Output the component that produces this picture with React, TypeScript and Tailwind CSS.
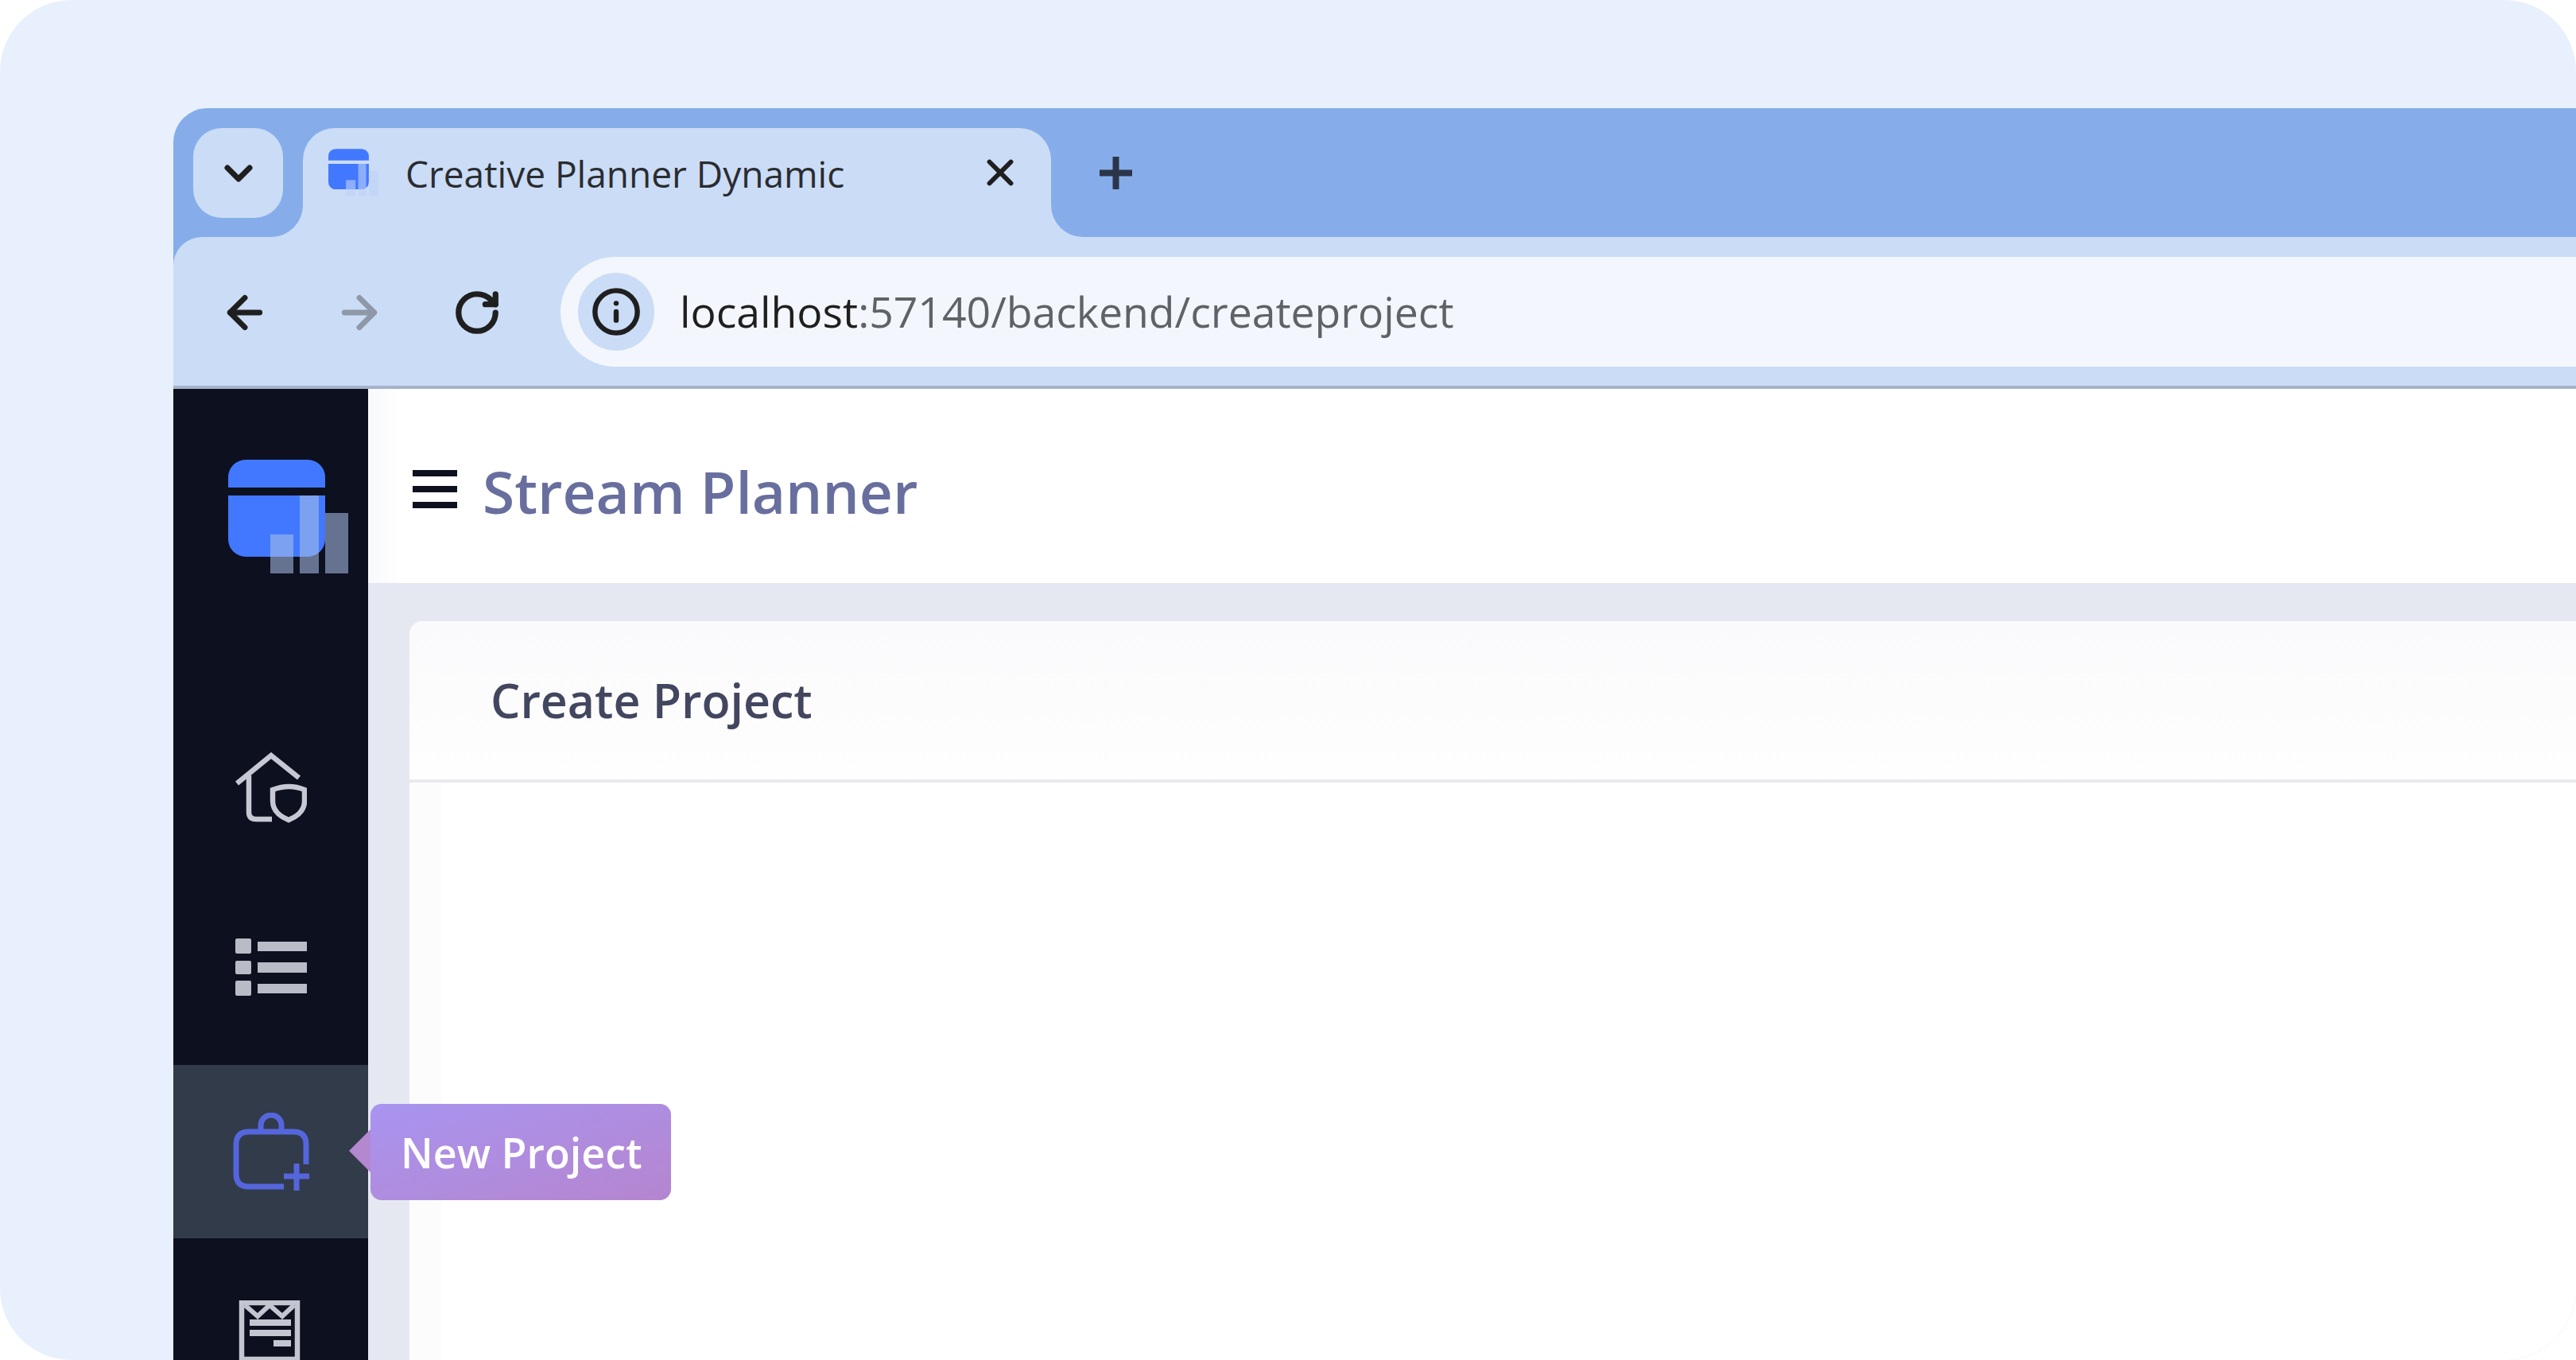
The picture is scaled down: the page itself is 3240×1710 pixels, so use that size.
import { ChevronDown, X, ArrowLeft, ArrowRight, RotateCw, Info } from "lucide-react";

const uiFont = "font-['Open_Sans','Noto_Sans',sans-serif]";

// logo, also used small as the favicon
const Logo = ({ className, bars }: { className: string; bars: string }) => (
  <svg viewBox="0 0 151 143" className={className}>
    <path d="M0 35V22A22 22 0 0 1 22 0H100A22 22 0 0 1 122 22V35Z" fill="#4278ff" />
    <path d="M0 45H122V100A22 22 0 0 1 100 122H22A22 22 0 0 1 0 100Z" fill="#4278ff" />
    <rect x="53" y="94" width="29" height="49" fill={bars} />
    <rect x="90" y="45" width="24" height="98" fill={bars} />
    <rect x="122" y="67" width="29" height="76" fill={bars} />
  </svg>
);

const HomeIcon = () => (
  <svg viewBox="0 0 90 90" className="w-[90px] h-[90px]" fill="none" stroke="#c6c9d3" strokeWidth="6.5">
    <path d="M2 40L45 5L80 33" />
    <path d="M17 30V76Q17 85 26 85H46" />
    <path d="M47 48Q68 40 87 48V62Q87 78 67 86Q47 78 47 62Z" />
  </svg>
);

const ListIcon = () => (
  <svg viewBox="0 0 90 74" className="w-[90px] h-[74px]" fill="#b9bcc7">
    <rect x="0" y="0" width="20" height="19" rx="2" />
    <rect x="0" y="28" width="20" height="17" rx="2" />
    <rect x="0" y="53" width="20" height="19" rx="2" />
    <rect x="28" y="4" width="62" height="12" />
    <rect x="28" y="30" width="62" height="13" />
    <rect x="28" y="57" width="62" height="12" />
  </svg>
);

const NewProjectIcon = () => (
  <svg viewBox="0 0 96 98" className="w-[96px] h-[98px]" fill="none" stroke="#5566dd" strokeWidth="7">
    <path d="M35 24V16A13 13 0 0 1 61 16V24" />
    <path d="M64 93H20Q4 93 4 77V40Q4 24 20 24H76Q92 24 92 40V65" />
    <path d="M64 80H96M80 64V98" />
  </svg>
);

const BoardIcon = () => (
  <svg viewBox="0 0 78 78" className="w-[78px] h-[78px]" fill="none" stroke="#c3c6d0">
    <rect x="4" y="3" width="70" height="71" strokeWidth="6.5" />
    <path d="M8 6L24 20L39 6L55 20L70 6" strokeWidth="6" />
    <path d="M14 28H66M14 41H66M44 54H66" strokeWidth="8" />
  </svg>
);

const PlusIcon = () => (
  <svg viewBox="0 0 41 41" className="w-[41px] h-[41px]" fill="none" stroke="#2c3548" strokeWidth="8">
    <path d="M0 20.5H41M20.5 0V41" />
  </svg>
);

const App = () => {
  return (
    <div className="w-[3240px] h-[1710px] bg-white overflow-hidden">
      <div className={`h-full rounded-[90px] bg-[#e8f0fe] pt-[136px] pl-[218px] overflow-hidden ${uiFont}`}>
        <div className="h-full flex flex-col rounded-tl-[43px] overflow-hidden bg-[#86adea]">
          {/* Tab strip */}
          <div className="h-[162px] shrink-0 flex items-start pt-[25px] pl-[25px]">
            <div className="relative z-10 w-[113px] h-[113px] rounded-[36px] bg-[#cbdcf6] flex items-center justify-center">
              <ChevronDown size={56} strokeWidth={3} color="#1f1f1f" />
            </div>
            <div className="relative ml-[25px] w-[941px] h-[137px] rounded-t-[40px] bg-[#cbdcf6] flex items-start pt-[24px] pl-[32px]">
              <Logo className="w-[63px] h-[64px] shrink-0" bars="rgba(190,210,250,0.6)" />
              <span className="ml-[34px] text-[46px] leading-[66px] text-[#2a2c30] whitespace-nowrap">
                Creative Planner Dynamic
              </span>
              <X size={54} strokeWidth={2.6} color="#1f1f1f" className="absolute left-[850px] top-[29px]" />
              <div className="absolute -left-[40px] bottom-0 w-[40px] h-[40px] bg-[#cbdcf6]">
                <div className="w-full h-full bg-[#86adea] rounded-br-[40px]" />
              </div>
              <div className="absolute -right-[40px] bottom-0 w-[40px] h-[40px] bg-[#cbdcf6]">
                <div className="w-full h-full bg-[#86adea] rounded-bl-[40px]" />
              </div>
            </div>
            <div className="ml-[61px] mt-[36px]">
              <PlusIcon />
            </div>
          </div>

          {/* Toolbar */}
          <div className="h-[191px] shrink-0 flex items-center pl-[58px] rounded-tl-[36px] bg-[#cbdcf6] border-b-[4px] border-[#a5b2c9]">
            <ArrowLeft size={64} strokeWidth={2.6} color="#1f1f1f" className="mt-[2px]" />
            <ArrowRight size={64} strokeWidth={2.6} color="#8e98a8" className="ml-[80px] mt-[2px]" />
            <RotateCw size={62} strokeWidth={2.8} color="#1f1f1f" className="ml-[85px] mt-[2px]" />
            <div className="ml-[74px] flex-1 h-[138px] rounded-l-[69px] bg-[#f3f7fd] flex items-center pl-[22px]">
              <div className="w-[96px] h-[98px] rounded-full bg-[#cbdcf6] flex items-center justify-center">
                <Info size={64} strokeWidth={2.4} color="#1f1f1f" />
              </div>
              <span className="ml-[32px] text-[53.5px] leading-none text-[#5f6368] whitespace-nowrap">
                <span className="text-[#1f1f1f]">localhost</span>:57140/backend/createproject
              </span>
            </div>
          </div>

          {/* Page */}
          <div className="flex-1 min-h-0 flex">
            <nav className="w-[245px] shrink-0 bg-[#0c101f] flex flex-col items-center">
              <div className="h-[456px] shrink-0 w-full pt-[89px] pl-[69px]">
                <Logo className="w-[151px] h-[143px]" bars="rgba(170,191,230,0.57)" />
              </div>
              <div className="h-[235px] shrink-0 w-full flex items-start justify-center">
                <HomeIcon />
              </div>
              <div className="h-[159px] shrink-0 w-full flex items-start justify-center">
                <ListIcon />
              </div>
              <div className="h-[218px] shrink-0 w-full bg-[#323b4a] flex items-center justify-center">
                <NewProjectIcon />
              </div>
              <div className="shrink-0 w-full flex justify-center pt-[78px] pr-[3px]">
                <BoardIcon />
              </div>
            </nav>

            <main className="relative flex-1 min-w-0 flex flex-col bg-[#e5e8f1]">
              <header className="h-[244px] shrink-0 bg-[linear-gradient(90deg,#f8f9fb,#ffffff_40px)] flex items-center pl-[56px] gap-[32px]">
                <div className="mt-[8px] w-[56px] flex flex-col gap-[12px]">
                  <span className="h-[8px] bg-[#0c101f]" />
                  <span className="h-[8px] bg-[#0c101f]" />
                  <span className="h-[8px] bg-[#0c101f]" />
                </div>
                <h1 className="mt-[14px] text-[73px] font-semibold text-[#686f9e] whitespace-nowrap">Stream Planner</h1>
              </header>

              <div className="flex-1 min-h-0 pt-[48px] pl-[52px]">
                <div className="h-full rounded-tl-[16px] bg-white flex flex-col overflow-hidden">
                  <div className="h-[203px] shrink-0 bg-gradient-to-b from-[#fafafc] to-[#fefefe] border-b-[4px] border-[#e9eaf0] flex items-center pl-[102px]">
                    <h2 className="text-[59px] font-semibold text-[#43465f] whitespace-nowrap">Create Project</h2>
                  </div>
                  <div className="flex-1 flex">
                    <div className="w-[40px] bg-[#fcfcfd]" />
                    <div className="flex-1 bg-white" />
                  </div>
                </div>
              </div>

              {/* Hover tooltip */}
              <div className="absolute left-[3px] top-[899px] flex items-center">
                <span className="absolute -left-[27px] top-[30px] w-[58px] h-[58px] [clip-path:polygon(0_50%,50%_0,100%_50%,50%_100%)] bg-[#b388cf]" />
                <div className="relative w-[378px] h-[121px] rounded-[14px] bg-gradient-to-br from-[#a894f0] to-[#b585cf] flex items-center pl-[38px]">
                  <span className="text-[52px] font-semibold text-white whitespace-nowrap">New Project</span>
                </div>
              </div>
            </main>
          </div>
        </div>
      </div>
    </div>
  );
};

export default App;
